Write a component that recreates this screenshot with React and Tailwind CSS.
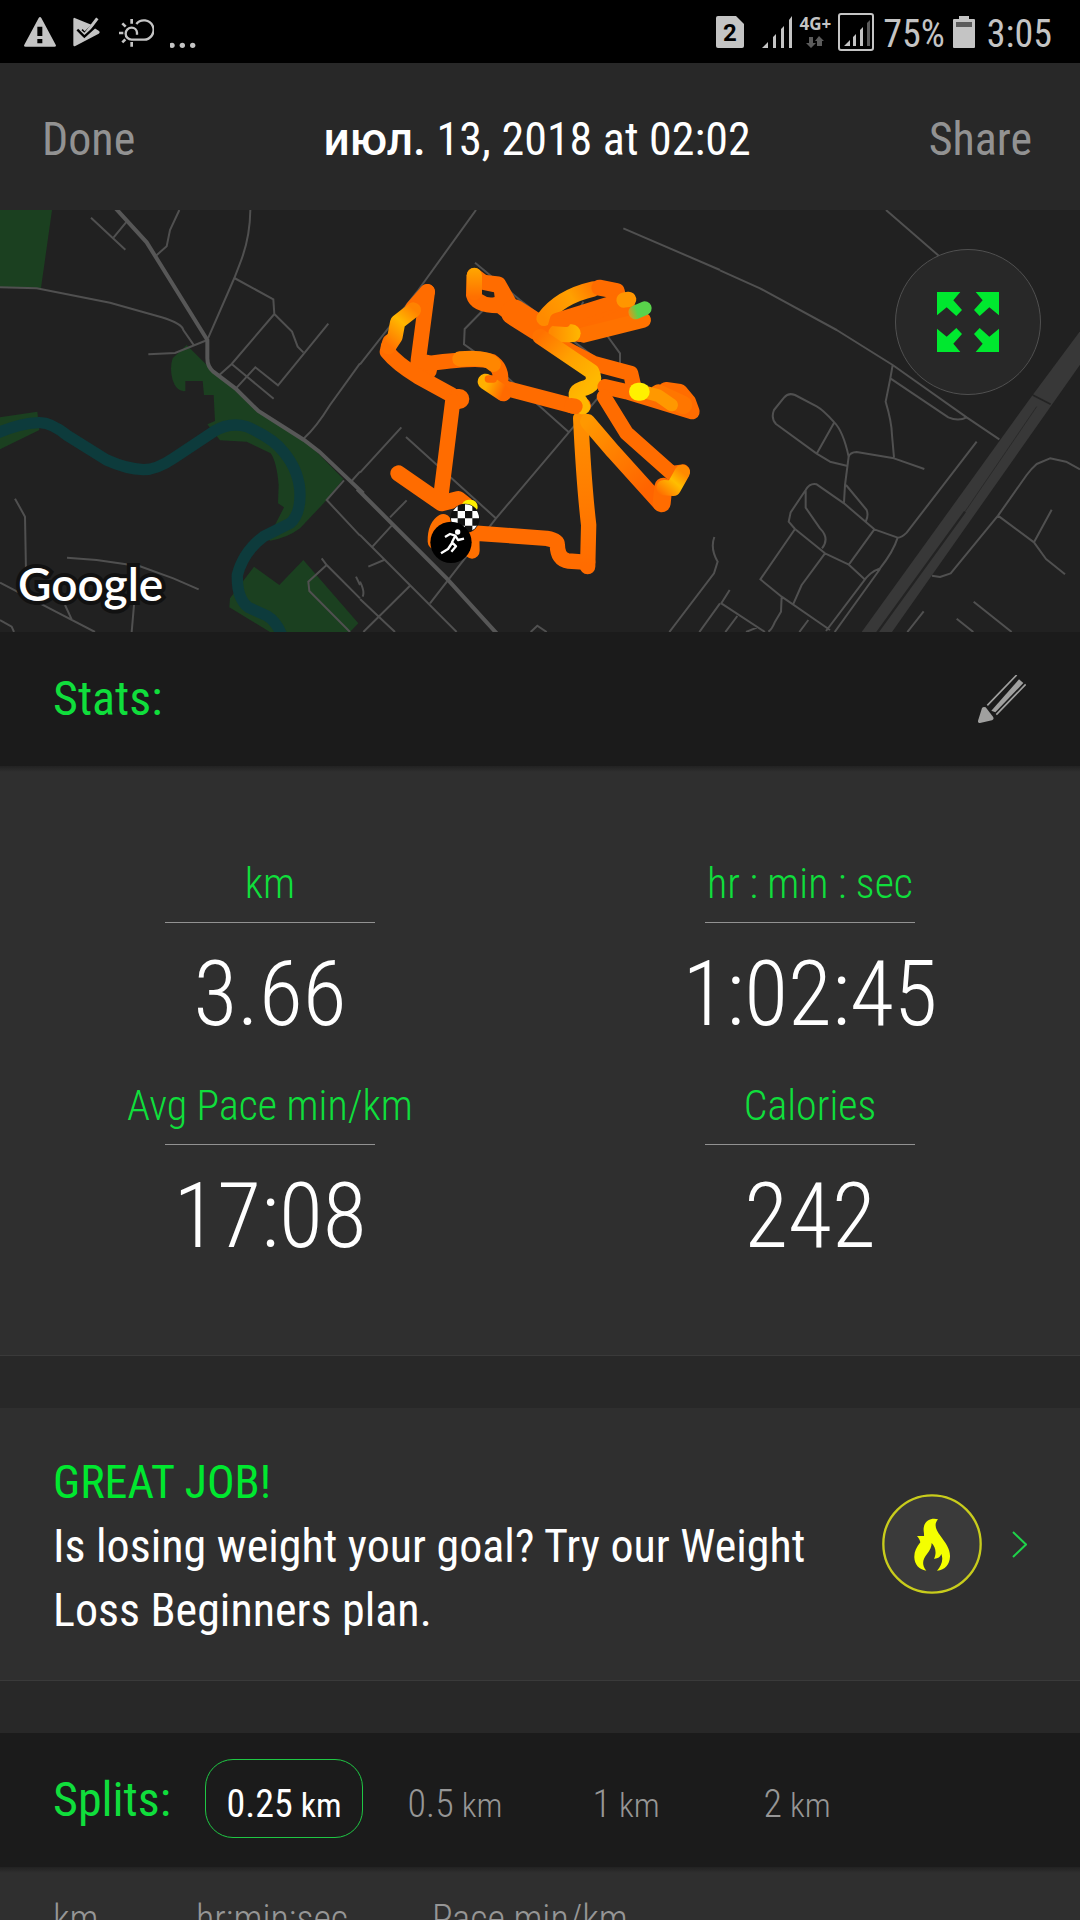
import { useState } from 'react';

const stats = [
  { label: 'km', value: '3.66' },
  { label: 'hr : min : sec', value: '1:02:45' },
  { label: 'Avg Pace min/km', value: '17:08' },
  { label: 'Calories', value: '242' },
];

const splits = ['0.25', '0.5', '1', '2'];

function StatusBar() {
  return (
    <div className="flex h-[63px] shrink-0 items-center justify-between bg-black pr-7 pl-6 font-normal text-[#c4c4c4]">
      <div className="flex items-center gap-4">
        <svg className="h-8 w-8" viewBox="0 0 96 96" fill="currentColor" aria-label="Warning">
          <path fillRule="evenodd" d="M44 6Q48 0 52 6L95 86Q98 92 91 92H5Q-2 92 1 86ZM40 32V60H55V32ZM40 69V82H55V69Z" />
        </svg>
        <svg className="h-8 w-[30px]" viewBox="0 0 90 96" fill="none" aria-label="Play">
          <path d="M8 6Q4 4 4 10V86Q4 93 10 90L80 53Q86 48 80 44L66 35 42 61Q37 65 32 60L22 49 32 39 38 46 58 26Z" fill="currentColor" />
          <path d="M20 43L38 60L71 10" stroke="#000" strokeWidth="5" />
          <path d="M22 43L38 57L76 7" stroke="currentColor" strokeWidth="9" />
          <path d="M16 41L37 62L76 27" stroke="#000" strokeWidth="7" />
        </svg>
        <svg className="h-8 w-9" viewBox="0 0 106 96" fill="none" stroke="currentColor" strokeWidth="7" aria-label="Weather">
          <path d="M56 56V50A16 16 0 0 0 40 35A18 18 0 0 0 40 71H75A29 29 0 1 0 54 24" />
          <path d="M40 9V23M40 78V92M2 51H15M12 22L22 32M12 79L21 70" strokeWidth="8" />
        </svg>
        <svg className="h-8 w-7" viewBox="0 0 84 96" fill="currentColor" aria-label="More notifications">
          <circle cx="6" cy="88" r="8" /><circle cx="37" cy="88" r="8" /><circle cx="68" cy="88" r="8" />
        </svg>
      </div>
      <div className="flex items-center">
        <svg className="h-8 w-7" viewBox="0 0 28 32" role="img" aria-label="SIM 2">
          <path d="M2 0H20L28 8V30Q28 32 26 32H2Q0 32 0 30V2Q0 0 2 0Z" fill="currentColor" />
          <text x="14" y="25" textAnchor="middle" className="fill-black font-['Roboto'] text-2xl font-bold">2</text>
        </svg>
        <svg className="ml-4 h-8 w-[34px]" viewBox="0 0 34 32" fill="currentColor" aria-label="Signal">
          <path d="M2 32L8 26V32ZM13 21L16 18V32H13ZM21 13L24 10V32H21ZM29 4L32 0V32H29Z" />
        </svg>
        <div className="ml-1.5 flex flex-col items-center">
          <span className="font-['Open_Sans'] text-[17px] leading-4 font-bold">4G+</span>
          <svg className="mt-1 h-3 w-5" viewBox="0 0 20 12" fill="#5b5b5b" aria-hidden="true">
            <path d="M4 1H8V7H11L6 12L1 7H4ZM12 10H17V5H19L14 0L10 5H12Z" />
          </svg>
        </div>
        <svg className="ml-1.5 h-[38px] w-[38px]" viewBox="0 0 38 38" aria-label="Signal, second line">
          <rect x="2" y="1" width="34" height="36" rx="2" fill="none" stroke="currentColor" strokeWidth="2" />
          <path d="M7 33L13 27V33ZM16 24L19 21V33H16ZM23 17L26 14V33H23Z" fill="currentColor" />
          <path d="M30 10L33 7V33H30Z" fill="#5b5b5b" />
        </svg>
        <span className="ml-2 pt-1 text-[38px] leading-none">75%</span>
        <svg className="ml-2 h-8 w-[22px]" viewBox="0 0 22 32" aria-label="Battery">
          <path d="M6 0H16V3H21Q22 3 22 4V31Q22 32 21 32H1Q0 32 0 31V4Q0 3 1 3H6Z" fill="currentColor" />
          <path d="M3 6H19V11H3Z" fill="#5b5b5b" />
        </svg>
        <span className="ml-3 pt-1 text-[38px] leading-none">3:05</span>
      </div>
    </div>
  );
}

function MapDrawing() {
  return (
    <svg className="block h-auto w-full" viewBox="0 0 3240 1266" fill="none" role="img" aria-label="Route map">
      <defs>
        <linearGradient id="ear" gradientUnits="userSpaceOnUse" x1="700" y1="250" x2="550" y2="340"><stop offset="0" stopColor="#ff7a00" /><stop offset=".4" stopColor="#ffa000" /><stop offset="1" stopColor="#ff8a00" /></linearGradient>
        <linearGradient id="neck" gradientUnits="userSpaceOnUse" x1="540" y1="390" x2="700" y2="530"><stop offset="0" stopColor="#ff7200" /><stop offset=".5" stopColor="#ffa000" /><stop offset="1" stopColor="#ffb800" /></linearGradient>
        <linearGradient id="tail" gradientUnits="userSpaceOnUse" x1="170" y1="320" x2="85" y2="420"><stop offset="0" stopColor="#ff8200" /><stop offset=".4" stopColor="#ffb800" /><stop offset="1" stopColor="#ff7200" /></linearGradient>
        <linearGradient id="rearLeg" gradientUnits="userSpaceOnUse" x1="680" y1="650" x2="860" y2="850"><stop offset="0" stopColor="#ff9800" /><stop offset="1" stopColor="#ff6400" /></linearGradient>
        <linearGradient id="frontLeg" gradientUnits="userSpaceOnUse" x1="660" y1="640" x2="685" y2="1080"><stop offset="0" stopColor="#ff9000" /><stop offset="1" stopColor="#ff6c00" /></linearGradient>
        <linearGradient id="paw" gradientUnits="userSpaceOnUse" x1="965" y1="800" x2="905" y2="870"><stop offset="0" stopColor="#ff8a00" /><stop offset=".4" stopColor="#ffbe00" /><stop offset="1" stopColor="#ff7000" /></linearGradient>
        <linearGradient id="tip" gradientUnits="userSpaceOnUse" x1="800" y1="325" x2="830" y2="315"><stop offset="0" stopColor="#ff8a10" /><stop offset="1" stopColor="#59d34b" /></linearGradient>
        <linearGradient id="hand" gradientUnits="userSpaceOnUse" x1="380" y1="540" x2="430" y2="560"><stop offset="0" stopColor="#ffb000" /><stop offset="1" stopColor="#ff6a00" /></linearGradient>
        <linearGradient id="crown" gradientUnits="userSpaceOnUse" x1="343" y1="190" x2="343" y2="275"><stop offset="0" stopColor="#ffa600" /><stop offset="1" stopColor="#ff7000" /></linearGradient>
        <linearGradient id="scarf" gradientUnits="userSpaceOnUse" x1="575" y1="385" x2="655" y2="385"><stop offset="0" stopColor="#ff8a00" /><stop offset="1" stopColor="#ffb400" /></linearGradient>
        <clipPath id="flag"><circle cx="315" cy="940" r="42" /></clipPath>
      </defs>
      <rect width="3240" height="1266" fill="#212121" />

      <g transform="translate(0 -15)">
        <g fill="#1b4020">
          <path d="M0 15H156L123 249L0 245ZM0 637L112 620L118 675L0 733Z" />
          <path d="M560 420L630 490L706 550L780 618L915 705L1030 822L980 885L900 970Q860 1000 810 1007L790 990L825 960L852 907L834 895L836 840Q830 770 812 745L740 710L660 706L622 658L645 648L641 570H612L608 528H556V558Q530 562 518 525Q508 490 518 460L560 420Z" />
          <path d="M762 1085L838 1140L910 1065L1075 1255L1050 1281H810L688 1207L690 1180Z" />
        </g>
        <path d="M-10 685Q60 655 115 653Q150 650 200 690L320 765Q380 792 430 794Q470 794 520 760L640 680Q690 650 740 665Q820 700 850 740Q900 800 900 870Q900 930 870 955L790 995Q730 1040 712 1110Q710 1180 745 1207L800 1232Q830 1250 845 1290" stroke="#0d3b3c" strokeWidth="34" />
        <g stroke="#505050" strokeWidth="6">
          <path d="M0 247L110 250L330 293L485 337Q545 355 550 375L582 421M445 448L525 444L622 405M273 38L376 134M380 50L341 97M538 15L510 75L500 124L468 152M751 15Q750 100 720 175L703 219L624 400M703 219L820 283L823 327L876 380L893 425L910 442M823 327L695 477L658 510M695 477L821 581M985 356L834 541L766 487L708 550M1080 475L990 600Q950 665 912 700M1032 826L980 885L1080 992M1080 800L1055 828M45 881L75 935L78 1100M201 1058L290 1065L420 1084L520 1120L596 1153M0 1133L150 1211L285 1281M195 1200L215 1243M402 1200L395 1281M0 1245L35 1265L42 1281M965 1060L980 1080L1080 1180M980 1080L925 1130L928 1158L1050 1281M1068 1115L1080 1140" />
        </g>
        <path d="M345 8L440 112L622 405V460Q622 485 640 500L706 550L775 618L912 705L958 740L1090 865" stroke="#575757" strokeWidth="12" />
      </g>

      <g transform="translate(1080 -15)">
        <g stroke="#505050" strokeWidth="6">
          <path d="M348 15L175 255L0 478M345 173L480 285L720 470M370 315L314 372L312 418L400 480L625 680M670 290L660 310M740 390L780 445V475M790 70L1080 195M730 560L408 940L210 1195M410 942L138 696M0 803L124 667M140 886L90 937M95 962L38 1024M25 1085L72 1065M0 990L290 1281M0 1182L105 1281M150 1142L10 1281M0 1130Q15 1160 8 1175M512 1281L532 1262L560 1281M1063 996Q1050 1030 1073 1070L1062 1105L928 1281M1080 1195L1018 1281" />
        </g>
        <path d="M-8 852L260 1120L410 1285" stroke="#575757" strokeWidth="12" />
        <g strokeLinecap="round" strokeLinejoin="round" strokeWidth="46" stroke="#ff6c00">
          <path d="M182 475L200 495" strokeWidth="62" />
          <path d="M202 260L175 465L210 475Q360 455 395 470Q425 490 422 530L430 565" />
          <path d="M300 462Q380 455 400 478" stroke="#ff8600" />
          <path d="M202 260L158 310M90 410L82 440Q110 475 175 515L275 570" />
          <path d="M160 315L113 352L105 395L85 425" stroke="url(#tail)" />
          <path d="M292 582H298" strokeWidth="60" />
          <path d="M278 590L243 870" />
          <path d="M115 805L245 895L295 882L318 900" strokeWidth="48" />
          <path d="M250 950Q225 965 226 1010M335 985L336 1038" stroke="#ff7000" />
          <path d="M340 984L560 1000Q592 1005 592 1020Q593 1065 625 1068L683 1072" />
          <path d="M662 640Q672 840 686 960L683 1085" stroke="url(#frontLeg)" />
          <path d="M430 548L640 603L670 602" />
          <path d="M377 530L430 565" stroke="url(#hand)" strokeWidth="48" />
          <path d="M385 522L400 522" strokeWidth="22" />
          <path d="M343 212L341 270Q350 303 420 302L470 340L445 290L415 237L370 232Z" fill="#ff6c00" />
          <path d="M343 211V262" stroke="url(#crown)" />
          <path d="M366 254L402 262L404 276Q385 282 366 268Z" fill="#212121" stroke="none" />
          <path d="M462 322L535 368" strokeWidth="78" />
          <path d="M545 390L615 430L700 475L812 505L820 540" />
          <path d="M552 340Q600 275 700 252" stroke="url(#ear)" />
          <path d="M718 248L770 258L775 280" strokeWidth="48" />
          <path d="M590 345L765 290L820 320L660 390L580 380Z" fill="#ff6c00" strokeWidth="42" />
          <path d="M670 390L850 345" stroke="#ff7200" />
          <path d="M792 285L806 283" stroke="#ff9600" />
          <path d="M826 322L854 310" stroke="url(#tip)" strokeWidth="42" />
          <path d="M592 385L635 385" stroke="url(#scarf)" strokeWidth="54" />
          <path d="M585 352L618 354" strokeWidth="24" />
          <path d="M540 395L695 500Q715 540 665 552Q635 562 660 590L668 605" stroke="url(#neck)" />
          <path d="M635 602L645 604" />
          <path d="M735 545L800 560L996 620L985 590L960 560L918 554" />
          <path d="M895 565L970 600" stroke="#ff7600" strokeWidth="54" />
          <path d="M850 560L895 572L935 600" stroke="#ff9800" strokeWidth="38" />
          <path d="M834 560H842" stroke="#fff000" strokeWidth="54" />
          <path d="M732 575L800 685L935 805L968 800" strokeWidth="44" />
          <path d="M683 650L760 740L900 895" stroke="url(#rearLeg)" />
          <path d="M910 845L905 895" strokeWidth="54" />
          <path d="M967 802L940 850L912 848" stroke="url(#paw)" />
          <path d="M326 905H332" stroke="#fff000" strokeWidth="42" />
        </g>
        <circle cx="315" cy="940" r="44" fill="#111" />
        <g clipPath="url(#flag)">
          <path fill="#fff" d="M271 896h22v22h-22zM315 896h22v22h-22zM293 918h22v22h-22zM337 918h22v22h-22zM271 940h22v22h-22zM315 940h22v22h-22zM293 962h22v22h-22zM337 962h22v22h-22z" />
        </g>
        <circle cx="273" cy="1012" r="62" fill="#000" />
        <circle cx="293" cy="981" r="8" fill="#fff" />
        <path d="M255 996L270 987L286 992L276 1012L288 1024L274 1040M286 992L294 1005L312 1001M276 1014L264 1032L243 1045" stroke="#fff" strokeWidth="7" strokeLinejoin="round" />
      </g>

      <g transform="translate(2160 -15)">
        <path d="M1090 365V465L516 1281H425L938 570Z" fill="#383838" />
        <path d="M950 605L735 920" stroke="#232323" strokeWidth="2" />
        <path d="M735 920L470 1285" stroke="#232323" strokeWidth="7" />
        <path d="M938 570L992 598" stroke="#232323" strokeWidth="5" />
        <g stroke="#505050" strokeWidth="6" strokeLinejoin="round">
          <path d="M0 196L120 250L350 375L518 480L740 637L838 703M498 15L656 152M518 480L511 520L685 637Q715 650 740 637M511 520L497 590Q515 650 516 690L522 758M613 792L522 760L410 741Q390 742 386 755L375 840L372 892M386 755Q370 680 343 652Q310 615 290 604L225 570Q205 562 192 578L162 615Q152 640 168 657L290 746L330 770L383 783M343 652L290 746M378 840L440 915Q446 930 438 948M533 998L463 973L372 895L290 838Q270 833 257 855L212 922L206 950L225 972L315 1045L385 1078L433 1122M257 855V908L300 970Q330 1000 306 1030M463 973L387 1078M315 1045L245 1140L219 1199M225 972L121 1123L185 1175L330 1275M770 710L560 983Q545 998 533 998Q520 1040 480 1090Q450 1100 430 1130L318 1278M480 1092L344 1281M185 1175L183 1220L165 1250Q155 1275 145 1280M29 1155L4 1195L135 1281M52 1233L16 1281M110 1268L78 1281M265 1245L238 1281M1080 793L1038 770L990 760L950 777Q935 790 920 810L834 932L692 1105L660 1116L636 1112M834 932L942 1012L995 914M942 1012L978 1062L1035 1108M761 1190L875 1281M710 1241L760 1281M611 1219L562 1281" />
        </g>
      </g>
    </svg>
  );
}

function RouteMap() {
  return (
    <section className="relative shrink-0">
      <MapDrawing />
      <span className="absolute bottom-6 left-[18px] font-['Lato'] text-[46px] leading-12 font-semibold text-white [-webkit-text-stroke:8px_#111] [paint-order:stroke]">Google</span>
      <button aria-label="Expand map" className="absolute top-[39px] right-[39px] flex h-[146px] w-[146px] items-center justify-center rounded-full border border-[#505050] bg-[#282828]">
        <svg className="h-[60px] w-[62px]" viewBox="0 0 186 180" fill="#00e82f" aria-hidden="true">
          <path d="M0 0H70L49 25L75 54L58 72L29 46L0 70Z" />
          <path d="M186 0H116L137 25L111 54L128 72L157 46L186 70Z" />
          <path d="M0 180H70L49 155L75 126L58 108L29 134L0 110Z" />
          <path d="M186 180H116L137 155L111 126L128 108L157 134L186 110Z" />
        </svg>
      </button>
    </section>
  );
}

function Stat({ label, value }) {
  return (
    <div className="flex h-[222px] flex-col items-center">
      <dt className="flex flex-col items-center text-[42px] leading-[64px] text-[#10de3c]">
        {label}
        <span className="mt-1.5 h-px w-[210px] bg-[#929292]" />
      </dt>
      <dd className="mt-4 text-[90px] leading-[112px] text-white">{value}</dd>
    </div>
  );
}

export default function App() {
  const [split, setSplit] = useState('0.25');
  return (
    <div className="flex h-screen flex-col overflow-hidden bg-[#282828] font-['Roboto_Condensed','Roboto',sans-serif] font-light text-white">
      <StatusBar />
      <header className="flex h-[147px] shrink-0 items-center justify-between pt-1 pr-12 pl-[42px] text-[46px] leading-none font-normal">
        <button className="flex-1 text-left text-[#929292]">Done</button>
        <h1><span className="font-['Roboto'] font-medium">июл.</span> 13, 2018 at 02:02</h1>
        <button className="flex-1 text-right text-[#929292]">Share</button>
      </header>

      <RouteMap />

      <div className="flex h-[134px] shrink-0 items-center justify-between bg-[#1b1b1b] pr-[54px] pl-[53px]">
        <h2 className="text-[48px] leading-none font-normal text-[#10de3c]">Stats:</h2>
        <button aria-label="Edit stats">
          <svg className="h-12 w-12" viewBox="0 0 144 144" aria-hidden="true">
            <path d="M12 99Q16 94 23 97L45 125Q49 132 42 136L6 144Q-1 145 0 137Z" fill="#a0a09f" />
            <path d="M40 107L123 13L136 24L52 112Z" fill="#a0a09f" />
            <path d="M28 91L116 0M55 119L143 28" stroke="#a0a09f" strokeWidth="5" />
          </svg>
        </button>
      </div>

      <section className="shrink-0 border-b border-[#3a3a3a] bg-[#2f2f2f] bg-[linear-gradient(#222222,#2f2f2f_6px)] pt-[86px] pb-[59px]">
        <dl className="grid grid-cols-2">
          {stats.map((s) => <Stat key={s.label} {...s} />)}
        </dl>
      </section>

      <a href="#plan" className="mt-[52px] flex h-[273px] shrink-0 items-center border-b border-[#3a3a3a] bg-[#2f2f2f] px-[53px]">
        <div className="flex-1 pt-1 pr-8 text-[46px] leading-[64px] font-normal">
          <h2 className="text-[#00e82f]">GREAT JOB!</h2>
          <p>Is losing weight your goal? Try our Weight Loss Beginners plan.</p>
        </div>
        <svg className="h-[100px] w-[100px]" viewBox="0 0 300 300" aria-hidden="true">
          <circle cx="150" cy="150" r="146" fill="#3a3a3a" stroke="#c8cc1c" strokeWidth="7" />
          <path d="M168 76C150 71 128 77 125 102C124 111 127 120 126 126L105 126C110 132 114 138 115 145C103 161 96 174 97 191C98 210 110 226 133 230C118 212 122 196 135 180C144 169 149 158 149 147C160 158 165 177 156 194C166 195 175 189 178 180C185 198 178 216 165 230C190 227 203 211 204 188C205 164 190 146 175 125C161 106 155 91 168 76Z" fill="#f4ff00" />
        </svg>
        <svg className="ml-[30px] h-[27px] w-[15px]" viewBox="0 0 30 54" fill="none" aria-hidden="true">
          <path d="M2 2L28 27L2 52" stroke="#1fd24a" strokeWidth="4" />
        </svg>
      </a>

      <div className="mt-[52px] flex h-[134px] shrink-0 items-center bg-[#1b1b1b] pb-1 pl-[53px]">
        <h2 className="w-[152px] pt-1 text-[48px] leading-none font-normal text-[#10de3c]">Splits:</h2>
        <div className="flex gap-[13px]">
          {splits.map((s) => (
            <button
              key={s}
              aria-pressed={s === split}
              onClick={() => setSplit(s)}
              className={
                'flex h-[79px] w-[158px] items-baseline justify-center gap-2 rounded-[28px] border pt-4 text-[38px] ' +
                (s === split ? 'border-[#1fc744] font-normal text-white' : 'border-transparent text-[#969696]')
              }
            >
              {s} <span className="text-[34px]">km</span>
            </button>
          ))}
        </div>
      </div>

      <div className="min-h-0 flex-1 overflow-hidden bg-[#2f2f2f] bg-[linear-gradient(#222222,#2f2f2f_6px)] pt-6 pl-[53px]">
        <table className="text-left text-[38px] leading-[56px] text-[#969696]">
          <thead>
            <tr>
              <th className="w-[143px] font-light">km</th>
              <th className="w-[236px] font-light">hr:min:sec</th>
              <th className="font-light">Pace min/km</th>
            </tr>
          </thead>
        </table>
      </div>
    </div>
  );
}
